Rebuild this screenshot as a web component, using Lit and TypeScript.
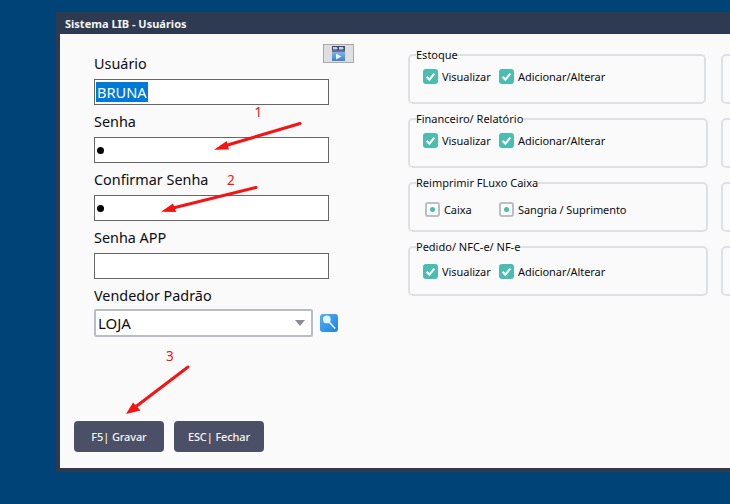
import { LitElement, html, css } from "lit";
import { customElement } from "lit/decorators.js";

const check = html`<svg class="cb" viewBox="0 0 15 15" width="15" height="15"><rect width="15" height="15" rx="3" fill="#48bdb0"/><path d="M3.6 7.8 6.3 10.6 11.4 4.6" fill="none" stroke="#fff" stroke-width="2.2"/></svg>`;
const radio = html`<span class="rd"><i></i></span>`;

@customElement("app-root")
export class AppRoot extends LitElement {
  static styles = css`
    :host { display: block; width: 730px; height: 504px; overflow: hidden; background: #004477; font-family: "Noto Sans", sans-serif; color: #0c0c14; position: relative; }
    .window { position: relative; box-sizing: border-box; margin: 12px 0 0 56px; width: 760px; height: 460px; background: #2d3a50; padding: 0 4px 4px; display: flex; flex-direction: column; }
    .title { height: 22px; padding-left: 5px; color: #f2f4f6; font: 700 11px/24px "Noto Sans", sans-serif; flex: none; }
    .body { flex: 1; background: #fafafa; display: flex; position: relative; }
    .left { width: 348px; flex: none; box-sizing: border-box; position: relative; }
    .form { padding: 19px 0 0 34px; display: flex; flex-direction: column; }
    .field { height: 58px; display: flex; flex-direction: column; }
    .lab { font-size: 14.4px; line-height: 20px; height: 26px; box-sizing: border-box; padding-top: 1px; width: 235px; white-space: nowrap; }
    .inp { box-sizing: border-box; width: 235px; height: 26px; background: #fff; border: 1px solid #666; font-size: 14.6px; line-height: 24px; padding-left: 1px; }
    .sel-t { background: #0078d7; color: #fff; padding: 0 1px; display: inline-block; height: 20px; line-height: 20px; margin-top: 2px; vertical-align: top; }
    .dot { display: block; width: 7px; height: 7px; background: #000; border-radius: 50%; margin: 9px 0 0 1px; }
    .row { display: flex; align-items: center; gap: 7px; height: 28px; margin-top: -2px; }
    .select { box-sizing: border-box; width: 219px; height: 28px; background: #fff; border: 2px solid #b9bdc1; border-radius: 2px; display: flex; align-items: center; justify-content: space-between; padding: 0 6px 0 2px; font-size: 15px; line-height: 22px; }
    .tri { width: 0; height: 0; border-style: solid; border-color: #8a8d96 transparent transparent; border-width: 6px 5.5px 0; }
    .srch { width: 18px; height: 18px; display: block; flex: none; }
    .imgbtn { position: absolute; left: 263px; top: 10px; box-sizing: border-box; width: 31px; height: 19px; background: #dfdfdf; border: 1px solid #a9a9a9; display: flex; align-items: center; justify-content: center; }
    .btns { position: absolute; left: 14px; top: 387px; display: flex; gap: 10px; }
    .btn { box-sizing: border-box; width: 90px; height: 31px; border-radius: 4px; background: #4c5066; color: #f4f4f6; font-size: 11px; font-weight: 500; letter-spacing: -0.12px; display: flex; align-items: center; justify-content: center; }
    .right { flex: 1; position: relative; }
    .perm { position: absolute; left: 333px; top: 0; font-size: 11px; line-height: 16px; white-space: nowrap; }
    .grid { padding: 15px 0 0 0; display: grid; grid-template-columns: 300px 300px; column-gap: 13px; row-gap: 9px; }
    fieldset { box-sizing: border-box; height: 55px; margin: 0; padding: 0; border: 2px solid #dde1e5; border-radius: 5px; min-width: 0; position: relative; display: flex; }
    fieldset.short { width: 298px; }
    fieldset.blank { height: 50px; margin-top: 5px; }
    legend { padding: 0; margin-left: 6px; font-size: 11px; line-height: 12px; height: 12px; white-space: nowrap; }
    .opts { display: flex; align-items: center; height: 35px; margin-top: -2px; padding-left: 13px; font-size: 11px; letter-spacing: -0.05px; }
    .opts.low { margin-top: 1px; }
    .opt { display: flex; align-items: center; gap: 4px; white-space: nowrap; }
    .opt:first-child { width: 76px; }
    .opts.r { padding-left: 15px; height: 41px; margin-top: 0; letter-spacing: -0.08px; }
    .opts.r .opt:first-child { width: 74px; }
    .cb { display: block; flex: none; }
    .rd { box-sizing: border-box; width: 15px; height: 15px; border: 2px solid #b9bfc4; border-radius: 3px; background: #fff; display: flex; align-items: center; justify-content: center; flex: none; }
    .rd i { width: 5px; height: 5px; border-radius: 50%; background: #48bdb0; display: block; }
    .notes { position: absolute; left: 0; top: 0; width: 730px; height: 504px; pointer-events: none; }
    .shaft { stroke: #f51414; stroke-width: 3; stroke-linecap: round; fill: none; }
    .head { fill: #f51414; }
    .n { fill: #f01414; font: 400 13.5px "Noto Sans", sans-serif; }
  `;

  private group(name: string, cls = "") {
    return html`<fieldset class=${cls === "short" ? "short" : ""}>
      <legend>${name}</legend>
      ${cls === "radio"
        ? html`<div class="opts r"><span class="opt">${radio}Caixa</span><span class="opt">${radio}Sangria / Suprimento</span></div>`
        : html`<div class="opts ${cls === "low" ? "low" : ""}"><span class="opt">${check}Visualizar</span><span class="opt">${check}Adicionar/Alterar</span></div>`}
    </fieldset>`;
  }

  render() {
    return html`
      <div class="window">
        <div class="title">Sistema LIB - Usuários</div>
        <div class="body">
          <div class="left">
            <div class="form">
              <div class="field"><div class="lab">Usuário</div><div class="inp"><span class="sel-t">BRUNA</span></div></div>
              <div class="field"><div class="lab">Senha</div><div class="inp"><i class="dot"></i></div></div>
              <div class="field"><div class="lab">Confirmar Senha</div><div class="inp"><i class="dot"></i></div></div>
              <div class="field"><div class="lab">Senha APP</div><div class="inp"></div></div>
              <div class="field"><div class="lab">Vendedor Padrão</div>
                <div class="row">
                  <div class="select">LOJA<span class="tri"></span></div>
                  <svg class="srch" viewBox="0 0 18 18"><defs><linearGradient id="g" x1="0" y1="0" x2="1" y2="1"><stop offset="0" stop-color="#4db0f5"/><stop offset="1" stop-color="#1f84e0"/></linearGradient></defs><rect width="18" height="18" rx="3" fill="url(#g)"/><circle cx="6.8" cy="5.4" r="3.9" fill="#e6f2fc"/><path d="M9.5 8.5 15.2 14.5" stroke="#fff" stroke-width="1.5"/></svg>
                </div>
              </div>
            </div>
            <div class="imgbtn">
              <svg width="13" height="15" viewBox="0 0 13 15"><defs><linearGradient id="b" x1="0" y1="0" x2="0" y2="1"><stop offset="0" stop-color="#7fb4e6"/><stop offset="1" stop-color="#3c80cc"/></linearGradient></defs><rect width="13" height="6" fill="#3a4770"/><path d="M1 1h3.5l1.5 1.3L4.5 3.5H1zM7 1h3.5L12 2.3 10.5 3.500H7z" fill="#c9d2e4"/><rect y="4.500" width="13" height="1" fill="#8d99b8"/><rect y="6" width="13" height="9" fill="url(#b)"/><path d="M4 7.500 9.500 10.500 4 13.500z" fill="#eef5fc"/></svg>
            </div>
            <div class="btns"><div class="btn">F5| Gravar</div><div class="btn">ESC| Fechar</div></div>
          </div>
          <div class="right">
            <div class="perm">Permissões</div>
            <div class="grid">
              ${this.group("Estoque", "short")}<fieldset class="blank"></fieldset>
              ${this.group("Financeiro/ Relatório")}<fieldset class="blank"></fieldset>
              ${this.group("Reimprimir FLuxo Caixa", "radio")}<fieldset class="blank"></fieldset>
              ${this.group("Pedido/ NFC-e/ NF-e", "low")}<fieldset class="blank"></fieldset>
            </div>
          </div>
        </div>
      </div>
      <svg class="notes" viewBox="0 0 730 504">
        <path class="shaft" d="M300 123.500 226 145.500"/><path class="head" d="M214 149.700 226.700 141 229 149.500z"/>
        <path class="shaft" d="M256 187.500 173 208"/><path class="head" d="M161 211.700 173 203.500 176 212z"/>
        <path class="shaft" d="M188 367 136 406.500"/><path class="head" d="M126 414 133 402.500 140.500 410.500z"/>
        <text class="n" x="254.500" y="117">1</text>
        <text class="n" x="227" y="184.500">2</text>
        <text class="n" x="166" y="361">3</text>
      </svg>
    `;
  }
}
